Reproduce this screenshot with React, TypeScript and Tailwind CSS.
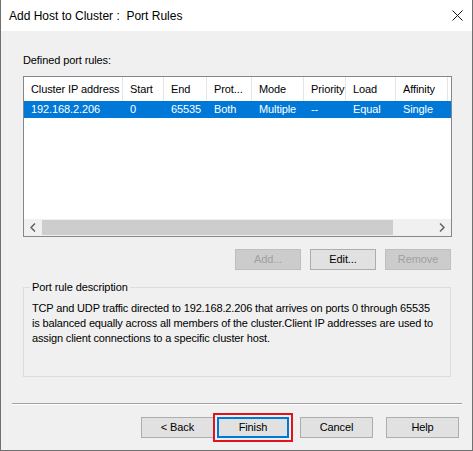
import React from 'react';

const columns = [
    { label: 'Cluster IP address', w: 'w-[99px]' },
    { label: 'Start', w: 'w-[41px]' },
    { label: 'End', w: 'w-[43px]' },
    { label: 'Prot...', w: 'w-[45px]' },
    { label: 'Mode', w: 'w-[52px]' },
    { label: 'Priority', w: 'w-[42px]' },
    { label: 'Load', w: 'w-[50px]' },
    { label: 'Affinity', w: 'w-[52px]' },
];

const row = ['192.168.2.206', '0', '65535', 'Both', 'Multiple', '--', 'Equal', 'Single'];

function WinButton({ label, disabled, w = 'w-[66px]', focused }: { label: string; disabled?: boolean; w?: string; focused?: boolean }) {
    return (
        <div
            className={[
                'h-[21px] flex items-center justify-center text-[11px] border',
                w,
                disabled
                    ? 'bg-[#cccccc] border-[#bfbfbf] text-[#a0a0a0]'
                    : focused
                        ? 'bg-[#e1e1e1] border-2 border-[#0078d7] text-black'
                        : 'bg-[#e1e1e1] border-[#adadad] text-black',
            ].join(' ')}
        >
            {label}
        </div>
    );
}

export default function App() {
    return (
        <div className="w-[473px] h-[451px] flex flex-col bg-[#f0f0f0] border-x border-b border-[#707070] font-['Liberation_Sans',Arial,sans-serif] text-[11px] tracking-[-0.1px] text-black overflow-hidden">
            {/* title bar */}
            <div className="h-[31px] shrink-0 bg-white flex items-center justify-between pl-[8px] pr-[9px]">
                <span className="text-[12px] tracking-normal whitespace-pre">Add Host to Cluster :  Port Rules</span>
                <svg width="11" height="11" viewBox="0 0 11 11">
                    <path d="M0.5 0.5 L10.5 10.5 M10.5 0.5 L0.5 10.5" stroke="#111" strokeWidth="1" />
                </svg>
            </div>

            <div className="flex flex-col pl-[22px] pr-[20px] pt-[23px]">
                <div className="h-[13px] leading-[13px]">Defined port rules:</div>

                {/* list view */}
                <div className="mt-[9px] w-[429px] h-[161px] border border-[#828790] bg-white flex flex-col">
                    <div className="h-[24px] flex items-center">
                        {columns.map((c, i) => (
                            <div key={i} className={`${c.w} h-full shrink-0 flex items-center pl-[7px] border-r border-[#e5e5e5] whitespace-nowrap overflow-hidden`}>
                                {c.label}
                            </div>
                        ))}
                    </div>
                    <div className="h-[17px] flex items-center bg-[#0078d7] text-white">
                        {row.map((v, i) => (
                            <div key={i} className={`${columns[i].w} shrink-0 pl-[7px] whitespace-nowrap`}>
                                {v}
                            </div>
                        ))}
                        <div className="flex-1" />
                    </div>
                    <div className="flex-1" />
                    {/* horizontal scrollbar */}
                    <div className="h-[17px] flex bg-[#f0f0f0]">
                        <div className="w-[18px] flex items-center justify-center">
                            <svg width="6" height="9" viewBox="0 0 6 9"><path d="M5 0.5 L1 4.5 L5 8.5" stroke="#606060" strokeWidth="1.5" fill="none" /></svg>
                        </div>
                        <div className="w-[351px] my-[1px] bg-[#cdcdcd]" />
                        <div className="flex-1" />
                        <div className="w-[18px] flex items-center justify-center">
                            <svg width="6" height="9" viewBox="0 0 6 9"><path d="M1 0.5 L5 4.5 L1 8.5" stroke="#606060" strokeWidth="1.5" fill="none" /></svg>
                        </div>
                    </div>
                </div>

                <div className="mt-[12px] w-[428px] flex justify-end gap-[9px]">
                    <WinButton label="Add..." disabled />
                    <WinButton label="Edit..." />
                    <WinButton label="Remove" disabled />
                </div>

                {/* group box */}
                <div className="relative mt-[17px] w-[428px] h-[90px] border border-[#dcdcdc]">
                    <span className="absolute left-[6px] top-[-7px] px-[2px] bg-[#f0f0f0] leading-[13px]">Port rule description</span>
                    <div className="pl-[8px] pt-[13px] leading-[15px] tracking-[-0.15px]">
                        TCP and UDP traffic directed to 192.168.2.206 that arrives on ports 0 through 65535<br />
                        is balanced equally across all members of the cluster.Client IP addresses are used to<br />
                        assign client connections to a specific cluster host.
                    </div>
                </div>
            </div>

            {/* separator */}
            <div className="mt-[26px] ml-[11px] w-[450px] border-t border-[#a0a0a0] border-b border-b-white" />

            <div className="mt-[8px] flex items-center pl-[140px]">
                <WinButton label="< Back" w="w-[73px]" />
                <div className="ml-[-1px] p-[2px] border-2 border-[#e0141e]">
                    <WinButton label="Finish" w="w-[72px]" focused />
                </div>
                <div className="ml-[7px]">
                    <WinButton label="Cancel" w="w-[73px]" />
                </div>
                <div className="ml-[13px]">
                    <WinButton label="Help" w="w-[73px]" />
                </div>
            </div>
        </div>
    );
}
